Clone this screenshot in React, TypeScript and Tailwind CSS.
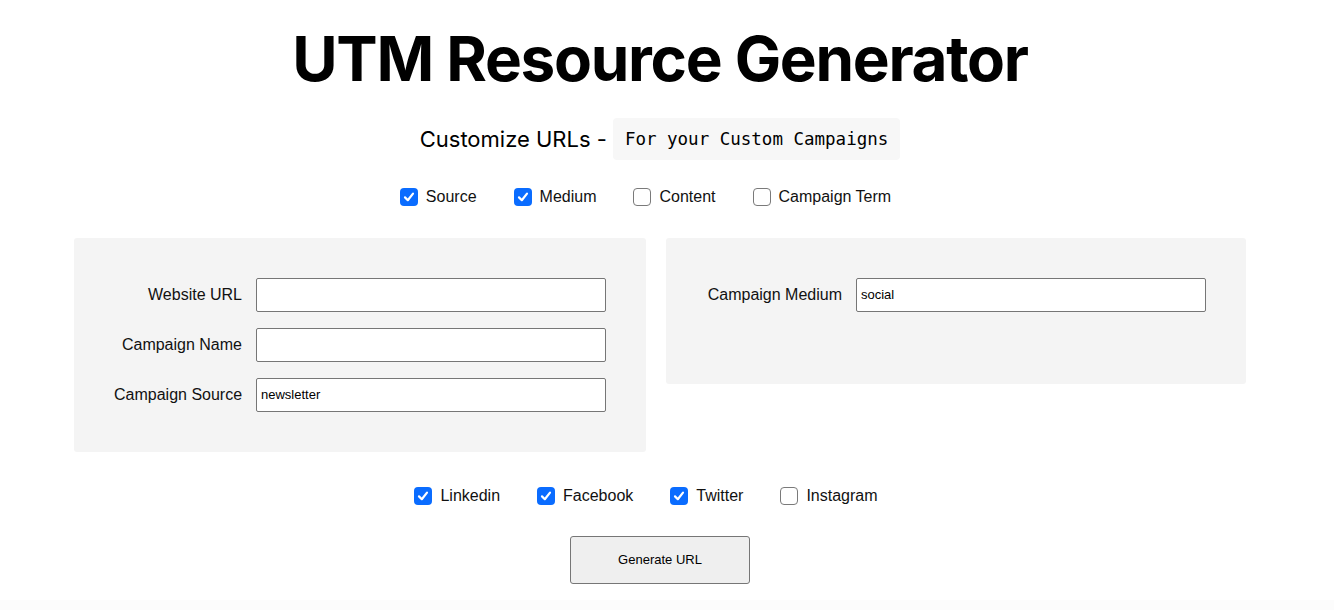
import React from "react";

const sans = "font-['Inter','Noto_Sans',sans-serif]";
const label = "font-['Liberation_Sans',Arial,sans-serif] text-[16px] text-[#111] whitespace-nowrap";

function Check({ text, checked }: { text: string; checked?: boolean }) {
  return (
    <label className={`flex items-center gap-2 ${label}`}>
      {checked ? (
        <span className="flex h-[18px] w-[18px] items-center justify-center rounded-[4px] bg-[#0a6cff]">
          <svg width="12" height="12" viewBox="0 0 12 12" fill="none">
            <path d="M2 6.4 L4.8 9.2 L10 2.6" stroke="white" strokeWidth="2.2" strokeLinecap="round" strokeLinejoin="round" />
          </svg>
        </span>
      ) : (
        <span className="h-[18px] w-[18px] rounded-[4px] border border-[#7a7a7a] bg-white" />
      )}
      <span>{text}</span>
    </label>
  );
}

function Field({ text, value, labelW }: { text: string; value?: string; labelW: string }) {
  return (
    <div className="flex items-center gap-[14px]">
      <span className={`${labelW} text-right ${label}`}>{text}</span>
      <div className="flex h-[34px] w-[350px] items-center rounded-[2px] border border-[#767676] bg-white px-[4px] font-['Liberation_Sans',sans-serif] text-[13px] text-black">
        {value}
      </div>
    </div>
  );
}

export default function App() {
  return (
    <div className={`${sans} h-[610px] w-[1334px] bg-white`}>
      <div className="flex w-[1320px] flex-col items-center">
        <h1 className="mt-[21px] text-[62px] leading-[76px] font-bold tracking-[-1.3px] text-black">
          UTM Resource Generator
        </h1>

        {/* subtitle */}
        <div className="mt-[21px] flex items-center gap-[6px] text-[22px] text-black">
          <span>Customize URLs -</span>
          <code className="flex h-[42px] items-center rounded-[4px] bg-[#f7f7f7] px-[12px] font-['DejaVu_Sans_Mono',monospace] text-[17.5px]">
            For your Custom Campaigns
          </code>
        </div>

        {/* param toggles */}
        <div className="mt-[25px] flex h-[24px] items-center gap-[37px] pr-[29px]">
          <Check text="Source" checked />
          <Check text="Medium" checked />
          <Check text="Content" />
          <Check text="Campaign Term" />
        </div>

        {/* panels */}
        <div className="mt-[29px] flex items-start gap-[20px]">
          <div className="flex flex-col gap-[16px] rounded-[3px] bg-[#f4f4f4] px-[40px] py-[40px]">
            <Field text="Website URL" labelW="w-[128px]" />
            <Field text="Campaign Name" labelW="w-[128px]" />
            <Field text="Campaign Source" labelW="w-[128px]" value="newsletter" />
          </div>
          <div className="flex flex-col rounded-[3px] bg-[#f4f4f4] px-[40px] pt-[40px] pb-[72px]">
            <Field text="Campaign Medium" labelW="w-[136px]" value="social" />
          </div>
        </div>

        {/* networks */}
        <div className="mt-[32px] flex h-[24px] items-center gap-[37px] pr-[28px]">
          <Check text="Linkedin" checked />
          <Check text="Facebook" checked />
          <Check text="Twitter" checked />
          <Check text="Instagram" />
        </div>

        <button className="mt-[28px] h-[48px] w-[180px] rounded-[3px] border border-[#767676] bg-[#efefef] font-['Liberation_Sans',sans-serif] text-[13px] text-black">
          Generate URL
        </button>
      </div>
      <div className="mt-[16px] h-[10px] bg-[#fcfcfc]" />
    </div>
  );
}
